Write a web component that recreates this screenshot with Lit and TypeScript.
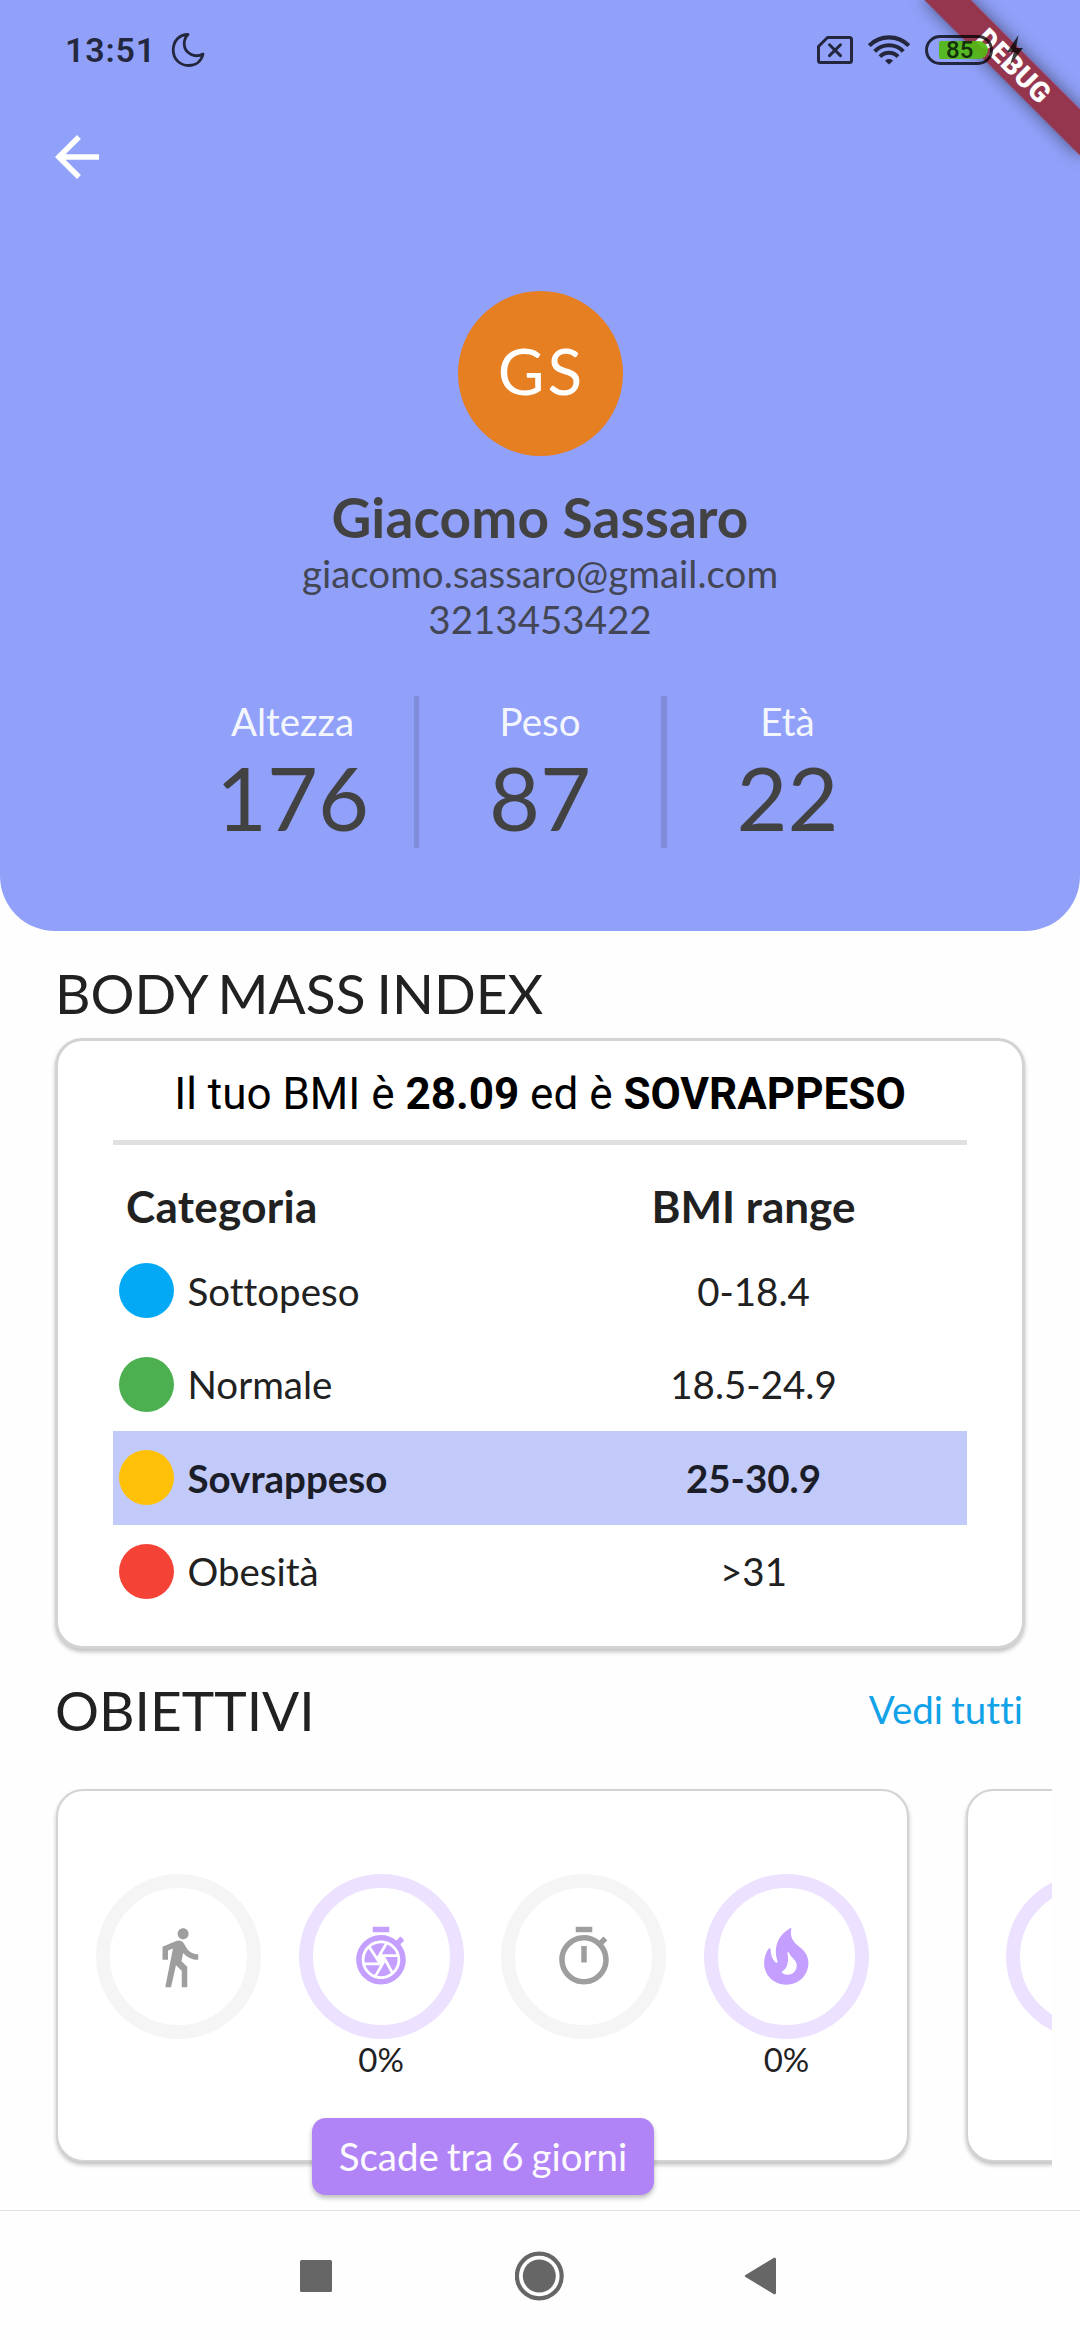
import { LitElement, html, css, svg } from "lit";
import { customElement, property } from "lit/decorators.js";
import { classMap } from "lit/directives/class-map.js";

const ICONS: Record<string, string> = {
  back: "M20 11H7.83l5.59-5.59L12 4l-8 8 8 8 1.41-1.41L7.83 13H20v-2z",
  walk: "M13.5 5.5c1.1 0 2-.9 2-2s-.9-2-2-2-2 .9-2 2 .9 2 2 2zM9.8 8.9L7 23h2.1l1.8-8 2.1 2v6h2v-7.5l-2.1-2 .6-3C14.8 12 16.8 13 19 13v-2c-1.9 0-3.5-1-4.3-2.4l-1-1.6c-.4-.6-1-1-1.7-1-.3 0-.5.1-.8.1L6 8.3V13h2V9.6l1.8-.7",
  shutter:
    "M15 1H9v2h6V1zm4.03 6.39l1.42-1.42c-.43-.51-.9-.99-1.41-1.41l-1.42 1.42C16.07 4.74 14.12 4 12 4c-4.97 0-9 4.03-9 9s4.02 9 9 9c4.97 0 9-4.03 9-9 0-2.12-.74-4.07-1.97-5.61zM12 20c-3.87 0-7-3.13-7-7s3.13-7 7-7 7 3.13 7 7-3.13 7-7 7zm-.32-5H6.35c.57 1.62 1.82 2.92 3.41 3.56l-.11-.06 2.03-3.5zm5.97-4c-.57-1.6-1.78-2.89-3.34-3.54L12.26 11h5.39zm-7.04 7.83c.45.11.91.17 1.39.17 1.34 0 2.57-.45 3.57-1.19l-2.11-3.9-2.85 4.92zM7.55 8.99C6.59 10.05 6 11.46 6 13c0 .34.04.67.09 1h4.72L7.55 8.99zm8.79 8.14C17.37 16.06 18 14.6 18 13c0-.34-.04-.67-.09-1h-4.34l2.77 5.13zm-3.01-9.98C12.9 7.05 12.46 7 12 7c-1.4 0-2.69.49-3.71 1.29l2.32 3.56 2.72-4.7z",
  timer:
    "M15 1H9v2h6V1zm-4 13h2V8h-2v6zm8.03-6.61l1.42-1.42c-.43-.51-.9-.99-1.41-1.41l-1.42 1.42C16.07 4.74 14.12 4 12 4c-4.97 0-9 4.03-9 9s4.02 9 9 9 9-4.03 9-9c0-2.12-.74-4.07-1.97-5.61zM12 20c-3.87 0-7-3.13-7-7s3.13-7 7-7 7 3.13 7 7-3.13 7-7 7z",
  fire: "M13.5 1.500C13.800 1.300 14 1.600 13.900 2C13.200 5.600 15.600 7.300 17.600 8.900C19.300 10.300 20.150 12.300 20.150 14.200C20.150 18.700 16.600 22.100 12.100 22.100C7.500 22.100 4.050 18.600 4.050 14.200C4.050 12.200 4.700 10.400 5.600 9.100C5.900 8.700 6.300 8.800 6.400 9.300C6.500 11.600 7.200 13.300 8.400 14.100C8.800 14.200 9 13.800 8.900 13.500C7.300 8.500 8.900 4.200 13.500 1.500zM12.500 10.500C13.100 13.400 12.700 15.800 10.600 17.300C10.400 17.500 10.500 17.800 10.800 17.900C13.300 19.400 15.900 17.700 15.900 15.100C15.900 12.900 13.900 12.300 13.100 10.500C12.900 10.100 12.500 10.100 12.500 10.500z",
};

interface Goal {
  icon: string;
  active: boolean;
  progress?: string;
}

const STATS = [
  { label: "Altezza", value: "176" },
  { label: "Peso", value: "87" },
  { label: "Età", value: "22" },
];

const CATEGORIES = [
  { name: "Sottopeso", range: "0-18.4", tone: "blue", current: false },
  { name: "Normale", range: "18.5-24.9", tone: "green", current: false },
  { name: "Sovrappeso", range: "25-30.9", tone: "amber", current: true },
  { name: "Obesità", range: ">31", tone: "red", current: false },
];

const GOALS: Goal[] = [
  { icon: "walk", active: false },
  { icon: "shutter", active: true, progress: "0%" },
  { icon: "timer", active: false },
  { icon: "fire", active: true, progress: "0%" },
];

@customElement("material-icon")
class MaterialIcon extends LitElement {
  @property() name = "";
  static styles = css`
    :host { display: block; width: 66px; height: 66px; }
    .glyph { display: block; width: 100%; height: 100%; fill: currentColor; }
  `;
  render() {
    return html`<svg class="glyph" viewBox="0 0 24 24">${svg`<path fill-rule="evenodd" d=${ICONS[this.name] ?? ""}></path>`}</svg>`;
  }
}

@customElement("status-bar")
class StatusBar extends LitElement {
  static styles = css`
    :host {
      display: flex; align-items: center; justify-content: space-between;
      box-sizing: border-box; height: 100px; padding: 0 57px 0 65px;
      color: rgba(0, 0, 0, 0.76);
      font-family: Roboto, sans-serif; font-weight: 500;
    }
    .side { display: flex; align-items: center; }
    .time { font-size: 34px; line-height: 40px; letter-spacing: 0.8px; margin-right: 15px; font-weight: 600; }
    .icon { display: block; fill: none; stroke: currentColor; }
    .wifi { margin: 0 15px; }
    .battery {
      box-sizing: border-box; width: 68px; height: 30px; margin-right: 13px;
      border: 3px solid currentColor; border-radius: 15px;
      display: flex; align-items: center; justify-content: flex-end; padding-right: 2px;
    }
    .level {
      width: 49px; height: 18px; border-radius: 2px 9px 9px 2px; background: rgba(83, 186, 18, 0.92);
      color: #12300a; font-size: 24px; line-height: 19px; box-sizing: border-box; padding-left: 7px;
    }
  `;
  render() {
    return html`
      <div class="side">
        <span class="time">13:51</span>
        <svg class="icon" width="34" height="36" viewBox="0 0 34 36" stroke-width="2.800" stroke-linejoin="round">
          <path d="M17 2.500C8 2.500 2.200 9.500 2.200 18C2.200 27 9 33.500 17.500 33.500C25 33.500 30.500 29 32 22C24 26.500 13.500 21.500 13.200 12C13.100 8.500 14.500 5 17 2.500z"></path>
        </svg>
      </div>
      <div class="side">
        <svg class="icon" width="36" height="28" viewBox="0 0 36 28" stroke-width="3" stroke-linejoin="round">
          <path d="M10.500 1.500H32.500a2 2 0 0 1 2 2V24.500a2 2 0 0 1-2 2H3.500a2 2 0 0 1-2-2V10.500z"></path>
          <path d="M12.500 8.800l11 10.800M23.500 8.800l-11 10.800" stroke-linecap="round"></path>
        </svg>
        <svg class="icon wifi" width="42" height="30" viewBox="0 0 42 30" stroke-width="4.100">
          <path d="M1.300 10.700C12-.400 30-.400 40.700 10.700M6.700 16.300C14.500 8.200 27.500 8.200 35.300 16.300M12 21.600C17 16.500 25 16.500 30 21.600"></path>
          <path d="M21 29.500l-4-3.700c2-2.300 6-2.300 8 0z" fill="currentColor" stroke="none"></path>
        </svg>
        <div class="battery"><div class="level">85</div></div>
        <svg class="icon" width="17" height="30" viewBox="0 0 17 30">
          <path d="M12.500 0L1 17h7L4 30L17 13H10z" fill="currentColor" stroke="none"></path>
        </svg>
      </div>
    `;
  }
}

@customElement("goal-ring")
class GoalRing extends LitElement {
  @property({ attribute: false }) goal!: Goal;
  static styles = css`
    :host { display: block; width: 165px; text-align: center; }
    .ring {
      display: grid; place-items: center; box-sizing: border-box;
      width: 165px; height: 165px; border-radius: 50%;
      border: 14px solid #f5f5f5; color: #9e9e9e;
    }
    .active { border-color: #ece2ff; color: #c49fff; }
    .progress { font-size: 33px; line-height: 40px; height: 40px; color: #212121; }
  `;
  render() {
    return html`
      <div class=${classMap({ ring: true, active: this.goal.active })}>
        <material-icon .name=${this.goal.icon}></material-icon>
      </div>
      <div class="progress">${this.goal.progress ?? ""}</div>
    `;
  }
}

@customElement("app-root")
class AppRoot extends LitElement {
  static styles = css`
    :host {
      display: flex; flex-direction: column; position: relative;
      width: 1080px; height: 2340px; overflow: hidden; background: #fefefe;
      font-family: Lato, "Liberation Sans", sans-serif; color: #212121; font-size: 38.5px;
      font-variant-ligatures: none;
    }
    .hero {
      box-sizing: border-box; height: 931px; flex: none; background: #91a1fa;
      border-radius: 0 0 55px 55px; display: flex; flex-direction: column;
    }
    .status { position: relative; z-index: 2; }
    .toolbar { height: 135px; padding: 24px 44px 0; box-sizing: border-box; color: #fff; }
    .profile { padding-top: 56px; display: flex; flex-direction: column; align-items: center; }
    .avatar {
      box-sizing: border-box; width: 165px; height: 165px; border-radius: 50%; background: #e67e22; color: #fff;
      text-align: center; font-size: 64px; line-height: 160px; letter-spacing: 3px; padding-left: 3px;
    }
    .name { margin-top: 28px; font-size: 55px; line-height: 66px; font-weight: 700; color: #424242; letter-spacing: 0.1px; }
    .contact { line-height: 46px; color: #434655; }
    .stats { margin-top: 54px; height: 152px; display: flex; justify-content: center; }
    .stat { width: 242px; text-align: center; }
    .rule { width: 5.5px; background: #7f8ddb; }
    .label { line-height: 46px; padding-top: 2px; color: rgba(255, 255, 255, 0.93); }
    .value { font-size: 88px; line-height: 106px; color: #424242; }

    .heading { font-size: 55px; line-height: 66px; word-spacing: -3px; }
    .card {
      box-sizing: border-box; background: #fff; border: 2px solid #d3d3d3; border-radius: 27.5px;
      box-shadow: 0 3px 4px rgba(0, 0, 0, 0.24);
    }
    .bmi-section { padding: 29px 55px 0; }
    .bmi { margin-top: 12px; height: 611px; padding: 0 55px; border-width: 3px; }
    .summary {
      font-family: Roboto, sans-serif; font-size: 44px; line-height: 52px; color: #000;
      text-align: center; padding: 27px 0 20px; border-bottom: 5px solid #e0e0e0; white-space: nowrap;
    }
    .columns { display: grid; grid-template-columns: 1fr 1fr; font-size: 44px; line-height: 53px; font-weight: 700; padding: 35px 0 11px; }
    .columns .lead { padding-left: 13px; letter-spacing: 0.3px; }
    .centered { text-align: center; }
    .row { display: grid; grid-template-columns: 1fr 1fr; align-items: center; height: 93.5px; }
    .row.current { background: #c2caf9; font-weight: 700; color: #1b1d29; }
    .category { display: flex; align-items: center; gap: 14px; padding-left: 5.5px; }
    .dot { width: 55px; height: 55px; border-radius: 50%; }
    .blue { background: #03a9f4; }
    .green { background: #4caf50; }
    .amber { background: #ffc107; }
    .red { background: #f44336; }

    .goals-head { display: flex; justify-content: space-between; align-items: center; padding: 28px 57px 0 55px; }
    .link { color: #12a2e8; padding-bottom: 3px; word-spacing: -2px; }
    .goals { margin: 0 28px; padding: 46px 28px 44px; display: flex; gap: 57px; overflow: hidden; }
    .goal-card { position: relative; flex: none; width: 853px; height: 373px; padding: 83px 38px 0; }
    .rings { display: flex; justify-content: space-between; }
    .badge {
      position: absolute; left: 254px; top: 327px; width: 342px; height: 77px; border-radius: 13.75px;
      background: #b084f7; color: #fdfaff; text-align: center; line-height: 77px; white-space: nowrap;
      box-shadow: 0 3px 5px rgba(0, 0, 0, 0.26); word-spacing: -2px;
    }
    .nav {
      margin-top: auto; flex: none; height: 130px; box-sizing: border-box; border-top: 1px solid #e2e2e2;
      background: #fefefe; display: flex; justify-content: center; align-items: center; position: relative;
    }
    .nav-icon { display: block; width: 50px; height: 50px; fill: #666; margin: 0 86px 0 86px; }
    .banner-clip { position: absolute; z-index: 1; right: 0; top: 0; width: 220px; height: 220px; overflow: hidden; }
    .banner {
      position: absolute; left: 110px; top: 77px; width: 220px; height: 33px; transform: rotate(45deg);
      transform-origin: 110px -77px; background: rgba(150, 30, 40, 0.82); box-shadow: 0 0 17px rgba(0, 0, 0, 0.5);
      color: #fff; font: 900 28px/33px Roboto, sans-serif; text-align: center; letter-spacing: 0.5px;
    }
  `;

  private renderHero() {
    return html`
      <header class="hero">
        <status-bar class="status"></status-bar>
        <div class="toolbar"><material-icon name="back"></material-icon></div>
        <div class="profile">
          <div class="avatar">GS</div>
          <div class="name">Giacomo Sassaro</div>
          <div class="contact">giacomo.sassaro@gmail.com</div>
          <div class="contact">3213453422</div>
        </div>
        <div class="stats">
          ${STATS.map(
            (s, i) => html`
              ${i ? html`<div class="rule"></div>` : ""}
              <div class="stat"><div class="label">${s.label}</div><div class="value">${s.value}</div></div>
            `
          )}
        </div>
      </header>
    `;
  }

  private renderBmi() {
    return html`
      <section class="bmi-section">
        <div class="heading">BODY MASS INDEX</div>
        <div class="card bmi">
          <div class="summary">Il tuo BMI è <b>28.09</b> ed è <b>SOVRAPPESO</b></div>
          <div class="columns"><span class="lead">Categoria</span><span class="centered">BMI range</span></div>
          ${CATEGORIES.map(
            (c) => html`
              <div class=${classMap({ row: true, current: c.current })}>
                <div class="category"><span class="dot ${c.tone}"></span><span>${c.name}</span></div>
                <span class="centered">${c.range}</span>
              </div>
            `
          )}
        </div>
      </section>
    `;
  }

  private renderGoals() {
    return html`
      <section>
        <div class="goals-head"><span class="heading">OBIETTIVI</span><span class="link">Vedi tutti</span></div>
        <div class="goals">
          <div class="card goal-card">
            <div class="rings">${GOALS.map((g) => html`<goal-ring .goal=${g}></goal-ring>`)}</div>
            <div class="badge">Scade tra 6 giorni</div>
          </div>
          <div class="card goal-card">
            <div class="rings"><goal-ring .goal=${{ icon: "", active: true }}></goal-ring></div>
          </div>
        </div>
      </section>
    `;
  }

  render() {
    return html`
      ${this.renderHero()} ${this.renderBmi()} ${this.renderGoals()}
      <nav class="nav">
        <svg class="nav-icon" viewBox="0 0 50 50"><rect x="7" y="9" width="32" height="32" rx="1.500"></rect></svg>
        <svg class="nav-icon" viewBox="0 0 50 50">
          <circle cx="24.300" cy="25" r="22.400" fill="none" stroke="#666" stroke-width="4.200"></circle>
          <circle cx="24.300" cy="25" r="16.500"></circle>
        </svg>
        <svg class="nav-icon" viewBox="0 0 50 50">
          <path d="M8.500 24Q7 25 8.500 26L37 43.200Q39 43.500 39 42V8Q39 6.500 37 6.800z"></path>
        </svg>
      </nav>
      <div class="banner-clip"><div class="banner">DEBUG</div></div>
    `;
  }
}
